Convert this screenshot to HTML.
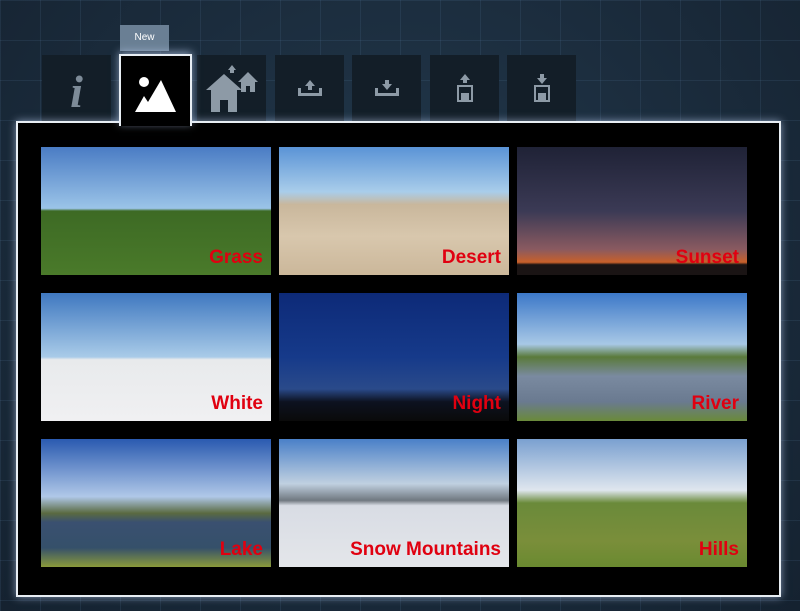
<!DOCTYPE html><html><head><style>
body{margin:0;width:800px;height:611px;overflow:hidden;font-family:"Liberation Sans",sans-serif;
background:#1d3042;background-image:linear-gradient(rgba(100,140,180,.13) 1px,transparent 1px),linear-gradient(90deg,rgba(100,140,180,.13) 1px,transparent 1px),radial-gradient(ellipse at 50% 40%,#22384c,#152230);background-size:40px 40px,40px 40px,100% 100%;position:relative}
.tab{position:absolute;top:55px;width:69px;height:66px;background:#131e28;display:flex;align-items:center;justify-content:center}
.new{position:absolute;left:120px;top:25px;width:49px;height:26px;background:#6a7f94;color:#fff;font-size:10px;text-align:center;line-height:26px}
.panel{position:absolute;left:16px;top:121px;width:761px;height:472px;background:#000;border:2px solid #e8eef4;box-shadow:0 0 8px rgba(200,220,255,.6)}
.act{position:absolute;left:119px;top:54px;width:69px;height:70px;background:#000;border:2px solid #e8eef4;border-bottom:none;z-index:2;display:flex;align-items:center;justify-content:center;box-shadow:0 -2px 8px rgba(200,220,255,.6)}
.img{position:absolute;width:230px;height:128px;overflow:hidden}
.img span{position:absolute;right:8px;bottom:6px;color:#e00010;font-weight:bold;font-size:19px}
</style></head><body>
<div class="new">New</div>
<div class="tab" style="left:42px"><span style="font:italic bold 46px 'Liberation Serif',serif;color:#7d8b98;margin-top:6px">i</span></div>
<div class="tab" style="left:197px"><svg width="56" height="56" viewBox="0 0 56 56" fill="#8d9aa6"><path d="M2 30 L20 14 L38 30 L33 30 L33 52 L24 52 L24 40 L16 40 L16 52 L7 52 L7 30Z"/><path d="M34 22 L44 12 L54 22 L51 22 L51 32 L46 32 L46 26 L42 26 L42 32 L37 32 L37 22Z"/><path d="M24 10 L28 5 L32 10 L30 10 L30 13 L26 13 L26 10Z"/></svg></div>
<div class="tab" style="left:275px"><svg width="26" height="20" fill="#8d9aa6"><path d="M13 2 L18 8 L15 8 L15 12 L11 12 L11 8 L8 8Z"/><path d="M1 10 h3 v5 h18 v-5 h3 v8 h-24z"/></svg></div>
<div class="tab" style="left:352px"><svg width="26" height="20" fill="#8d9aa6"><path d="M13 12 L18 6 L15 6 L15 2 L11 2 L11 6 L8 6Z"/><path d="M1 10 h3 v5 h18 v-5 h3 v8 h-24z"/></svg></div>
<div class="tab" style="left:430px"><svg width="18" height="30" fill="none" stroke="#8d9aa6" stroke-width="2"><path d="M9 1 L14 7 L11 7 L11 10 L7 10 L7 7 L4 7Z" fill="#8d9aa6" stroke="none"/><rect x="2" y="13" width="14" height="15"/><rect x="6" y="21" width="6" height="6" fill="#8d9aa6"/></svg></div>
<div class="tab" style="left:507px"><svg width="18" height="30" fill="none" stroke="#8d9aa6" stroke-width="2"><path d="M9 11 L14 5 L11 5 L11 1 L7 1 L7 5 L4 5Z" fill="#8d9aa6" stroke="none"/><rect x="2" y="13" width="14" height="15"/><rect x="6" y="21" width="6" height="6" fill="#8d9aa6"/></svg></div>
<div class="panel"></div>
<div class="act"><svg width="42" height="40" fill="#fff" style="margin-top:6px"><circle cx="9" cy="8" r="5"/><path d="M0 38 L9 22 L13 28 L26 6 L41 38Z"/></svg></div>
<div class="img" style="left:41px;top:147px;background:linear-gradient(#4a7cc4,#9bc4e8 48%,#3d6a24 50%,#4a7a2a)"><span>Grass</span></div>
<div class="img" style="left:279px;top:147px;background:linear-gradient(#5a93d6,#a9cdea 35%,#c9b79c 45%,#d8c7ad 70%,#cbb79a)"><span>Desert</span></div>
<div class="img" style="left:517px;top:147px;background:linear-gradient(#1f2236,#3b3a55 50%,#8a5a60 80%,#c8602a 90%,#1a1414 92%)"><span>Sunset</span></div>
<div class="img" style="left:41px;top:293px;background:linear-gradient(#3f78c0,#a9cbe8 50%,#e8eaec 52%,#f0f0f2)"><span>White</span></div>
<div class="img" style="left:279px;top:293px;background:linear-gradient(#0d2a78,#163a8a 50%,#2a4a8a 75%,#0d1220 85%,#0a0a0a)"><span>Night</span></div>
<div class="img" style="left:517px;top:293px;background:linear-gradient(#3c78c8,#a8c8e6 40%,#5a7a3a 50%,#7a8aa0 65%,#6a7a90 85%,#6a8a3a)"><span>River</span></div>
<div class="img" style="left:41px;top:439px;background:linear-gradient(#2a5ab0,#b0c8e8 45%,#5a6a40 58%,#3a5070 65%,#35506a 85%,#8a9a3a)"><span>Lake</span></div>
<div class="img" style="left:279px;top:439px;background:linear-gradient(#4a80c8,#c0d0e0 35%,#707880 48%,#d8dce4 52%,#e4e6ea)"><span>Snow Mountains</span></div>
<div class="img" style="left:517px;top:439px;background:linear-gradient(#7aa0d0,#dfe6ee 40%,#6a8a3a 50%,#7a8e3a 80%,#6a8a30)"><span>Hills</span></div>
</body></html>
